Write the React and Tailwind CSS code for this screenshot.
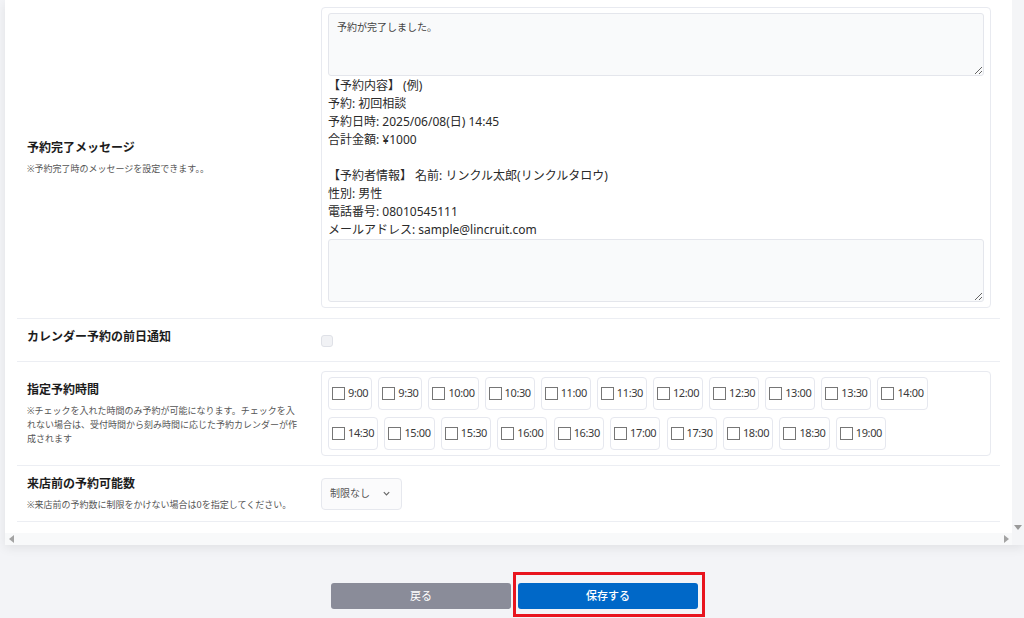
import React from "react";

const font = { fontFamily: '"Noto Sans", "Noto Sans CJK JP", sans-serif' };

const row1 = ["9:00", "9:30", "10:00", "10:30", "11:00", "11:30", "12:00", "12:30", "13:00", "13:30", "14:00"];
const row2 = ["14:30", "15:00", "15:30", "16:00", "16:30", "17:00", "17:30", "18:00", "18:30", "19:00"];

function Chip({ t }) {
  return (
    <div className="h-[33px] flex items-center gap-[3px] pl-[3px] pr-[3px] border border-[#e6e8ef] rounded-[4px] bg-white">
      <span className="w-[13px] h-[13px] border border-[#767676] bg-white" />
      <span className="text-[11px] text-[#3a3a3a] tracking-[-0.4px]">{t}</span>
    </div>
  );
}

function Label({ title, sub, extra = "" }) {
  return (
    <div className={"w-[304px] shrink-0 pl-[10px] pr-[20px] " + extra}>
      <div className="text-[12px] font-bold text-[#1c1c1c] leading-[16px]">{title}</div>
      {sub && <div className="mt-[6px] text-[9px] text-[#555] leading-[14px]">{sub}</div>}
    </div>
  );
}

export default function App() {
  return (
    <div className="w-[1024px] h-[618px] bg-[#f3f4f7] overflow-hidden" style={font}>
      <div className="ml-[5px] w-[1019px] h-[545px] bg-white flex shadow-[0_3px_10px_rgba(0,0,0,0.08)]">
        <div className="flex-1 flex flex-col">
          <div className="flex-1 px-[12px]">
            {/* Row 1 */}
            <div className="flex items-center pt-[7px] pb-[10px] pr-[9px] border-b border-[#eceef3]">
              <Label title="予約完了メッセージ" sub="※予約完了時のメッセージを設定できます。。" />
              <div className="flex-1 border border-[#e8eaf0] rounded-[4px] p-[6px] pt-[5px] pb-[5px]">
                <textarea
                  readOnly
                  defaultValue="予約が完了しました。"
                  className="block w-full h-[63px] bg-[#f9fafb] border border-[#e4e6ec] rounded-[3px] px-[8px] py-[6px] text-[10px] text-[#444] outline-none"
                  style={font}
                />
                <div className="text-[12px] leading-[18px] text-[#2a2a2a] pt-[1px]">
                  <div>【予約内容】 (例)</div>
                  <div>予約: 初回相談</div>
                  <div>予約日時: 2025/06/08(日) 14:45</div>
                  <div>合計金額: ¥1000</div>
                  <div>&nbsp;</div>
                  <div>【予約者情報】 名前: リンクル太郎(リンクルタロウ)</div>
                  <div>性別: 男性</div>
                  <div>電話番号: 08010545111</div>
                  <div>メールアドレス: sample@lincruit.com</div>
                </div>
                <textarea
                  readOnly
                  defaultValue=""
                  className="block w-full h-[63px] bg-[#f9fafb] border border-[#e4e6ec] rounded-[3px] px-[8px] py-[6px] text-[10px] text-[#444] outline-none"
                  style={font}
                />
              </div>
            </div>
            {/* Row 2 */}
            <div className="flex items-center h-[43px] border-b border-[#eceef3]">
              <Label title="カレンダー予約の前日通知" extra="pb-[6px]" />
              <span className="w-[12px] h-[12px] rounded-[3px] border border-[#dfe1e7] bg-[#f1f2f5] mt-[2px]" />
            </div>
            {/* Row 3 */}
            <div className="flex items-center pt-[9px] pb-[9px] pr-[9px] border-b border-[#eceef3]">
              <Label
                title="指定予約時間"
                sub="※チェックを入れた時間のみ予約が可能になります。チェックを入れない場合は、受付時間から刻み時間に応じた予約カレンダーが作成されます"
              />
              <div className="flex-1 border border-[#e8eaf0] rounded-[4px] p-[5px] pl-[6px] flex flex-col gap-[7px]">
                <div className="flex gap-[6px]">
                  {row1.map((t) => (
                    <Chip key={t} t={t} />
                  ))}
                </div>
                <div className="flex gap-[6.3px]">
                  {row2.map((t) => (
                    <Chip key={t} t={t} />
                  ))}
                </div>
              </div>
            </div>
            {/* Row 4 */}
            <div className="flex items-center h-[56px] border-b border-[#eceef3]">
              <Label title="来店前の予約可能数" sub="※来店前の予約数に制限をかけない場合は0を指定してください。" />
              <div className="w-[81px] h-[32px] border border-[#e6e8ee] rounded-[4px] bg-[#fbfbfc] flex items-center pl-[8px] pr-[8px] justify-between">
                <span className="text-[10px] text-[#555]">制限なし</span>
                <svg width="9" height="9" viewBox="0 0 10 10" className="mr-[2px]">
                  <path d="M2 3.5 L5 6.5 L8 3.5" fill="none" stroke="#666" strokeWidth="1.3" />
                </svg>
              </div>
            </div>
          </div>
          {/* horizontal scrollbar */}
          <div className="h-[12px] bg-[#f8f9fa] flex items-center justify-between pl-[4px] pr-[3px]">
            <svg width="6" height="8" viewBox="0 0 6 8">
              <path d="M5 0 L0 4 L5 8 Z" fill="#a3a3a3" />
            </svg>
            <svg width="6" height="8" viewBox="0 0 6 8">
              <path d="M1 0 L6 4 L1 8 Z" fill="#a3a3a3" />
            </svg>
          </div>
        </div>
        {/* vertical scrollbar */}
        <div className="w-[12px] bg-[#f4f5f7] flex flex-col justify-end items-center pb-[14px]">
          <svg width="8" height="6" viewBox="0 0 8 6">
            <path d="M0 0 L8 0 L4 5 Z" fill="#9a9a9a" />
          </svg>
        </div>
      </div>

      <div className="mt-[27px] flex justify-center pl-[12px]">
        <div className="flex items-start">
          <button className="mt-[11px] w-[180px] h-[26px] rounded-[3px] bg-[#8a8c99] text-white text-[11px] mr-[2px]" style={font}>
            戻る
          </button>
          <div className="border-[3px] border-[#e8141e] pl-[2px] pr-[4px] pt-[8px] pb-[5px]">
            <button className="block w-[180px] h-[26px] rounded-[3px] bg-[#0068c8] text-white text-[11px] font-medium" style={font}>
              保存する
            </button>
          </div>
        </div>
      </div>
    </div>
  );
}
